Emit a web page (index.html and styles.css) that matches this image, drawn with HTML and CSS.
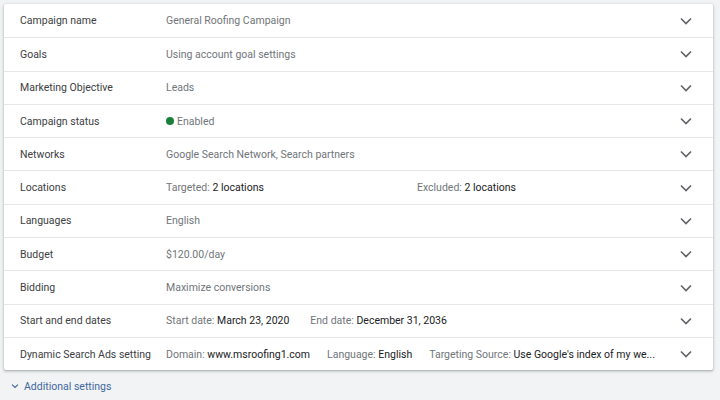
FILE: index.html
```html
<!DOCTYPE html>
<html lang="en">

<head>
    <meta charset="UTF-8">
    <title>Campaign settings</title>
    <link rel="stylesheet" href="styles.css">
</head>

<body>
    <!-- Settings panel -->
    <div class="settings">
        <div class="row">
            <div class="label">Campaign name</div>
            <div class="value">General Roofing Campaign</div>
            <svg class="chevron" viewBox="0 0 24 24"><path d="M7 9.5l5 5 5-5"/></svg>
        </div>
        <div class="row">
            <div class="label">Goals</div>
            <div class="value">Using account goal settings</div>
            <svg class="chevron" viewBox="0 0 24 24"><path d="M7 9.5l5 5 5-5"/></svg>
        </div>
        <div class="row">
            <div class="label">Marketing Objective</div>
            <div class="value">Leads</div>
            <svg class="chevron" viewBox="0 0 24 24"><path d="M7 9.5l5 5 5-5"/></svg>
        </div>
        <div class="row">
            <div class="label">Campaign status</div>
            <div class="value"><span class="dot"></span>Enabled</div>
            <svg class="chevron" viewBox="0 0 24 24"><path d="M7 9.5l5 5 5-5"/></svg>
        </div>
        <div class="row">
            <div class="label">Networks</div>
            <div class="value">Google Search Network, Search partners</div>
            <svg class="chevron" viewBox="0 0 24 24"><path d="M7 9.5l5 5 5-5"/></svg>
        </div>
        <div class="row">
            <div class="label">Locations</div>
            <div class="value halves">
                <span>Targeted: <b>2 locations</b></span>
                <span>Excluded: <b>2 locations</b></span>
            </div>
            <svg class="chevron" viewBox="0 0 24 24"><path d="M7 9.5l5 5 5-5"/></svg>
        </div>
        <div class="row">
            <div class="label">Languages</div>
            <div class="value">English</div>
            <svg class="chevron" viewBox="0 0 24 24"><path d="M7 9.5l5 5 5-5"/></svg>
        </div>
        <div class="row">
            <div class="label">Budget</div>
            <div class="value">$120.00/day</div>
            <svg class="chevron" viewBox="0 0 24 24"><path d="M7 9.5l5 5 5-5"/></svg>
        </div>
        <div class="row">
            <div class="label">Bidding</div>
            <div class="value">Maximize conversions</div>
            <svg class="chevron" viewBox="0 0 24 24"><path d="M7 9.5l5 5 5-5"/></svg>
        </div>
        <div class="row">
            <div class="label">Start and end dates</div>
            <div class="value items dates">
                <span>Start date: <b>March 23, 2020</b></span>
                <span>End date: <b>December 31, 2036</b></span>
            </div>
            <svg class="chevron" viewBox="0 0 24 24"><path d="M7 9.5l5 5 5-5"/></svg>
        </div>
        <div class="row">
            <div class="label">Dynamic Search Ads setting</div>
            <div class="value items">
                <span>Domain: <b>www.msroofing1.com</b></span>
                <span>Language: <b>English</b></span>
                <span class="clip">Targeting Source: <b>Use Google's index of my we...</b></span>
            </div>
            <svg class="chevron" viewBox="0 0 24 24"><path d="M7 9.5l5 5 5-5"/></svg>
        </div>
    </div>

    <!-- Additional settings link -->
    <a href="#" class="more">
        <svg viewBox="0 0 24 24"><path d="M7 9.5l5 5 5-5"/></svg>
        Additional settings
    </a>
</body>

</html>
```

FILE: styles.css
```css
body {
    margin: 0;
    background-color: #f1f3f4;
    font-family: Roboto, "Liberation Sans", sans-serif;
    font-size: 10.5px;
    color: #3c4043;
}

.settings {
    margin: 4px 7px 0 4px;
    background-color: #fff;
    border-radius: 2px;
    box-shadow: 0 1px 2px rgba(60, 64, 67, 0.3), 0 1px 3px 1px rgba(60, 64, 67, 0.12);
}

.row {
    display: flex;
    align-items: center;
    height: 33.3px;
    box-sizing: border-box;
    padding: 0 15px 0 16px;
    border-top: 1px solid #e6e7e9;
}

.row:first-child {
    border-top: none;
}

.label {
    width: 146px;
    flex-shrink: 0;
    color: #3c4043;
}

.value {
    flex: 1;
    min-width: 0;
    color: #70757a;
    display: flex;
    align-items: center;
}

.value b {
    font-weight: normal;
    color: #202124;
}

.value.halves {
    display: grid;
    grid-template-columns: 251px 1fr;
}

.items {
    gap: 17px;
}

.dates {
    gap: 21px;
}

.items span {
    white-space: nowrap;
}

.dot {
    width: 8px;
    height: 8px;
    border-radius: 50%;
    background-color: #188038;
    margin-right: 3px;
}

.chevron {
    width: 24px;
    height: 24px;
    flex-shrink: 0;
    margin-left: 12px;
    fill: none;
    stroke: #5f6368;
    stroke-width: 1.6;
}

/* Additional settings */
.more {
    display: flex;
    align-items: center;
    gap: 2px;
    margin: 9px 0 0 8px;
    color: #41679e;
    text-decoration: none;
}

.more svg {
    width: 14px;
    height: 14px;
    fill: none;
    stroke: #41679e;
    stroke-width: 2;
}
```
